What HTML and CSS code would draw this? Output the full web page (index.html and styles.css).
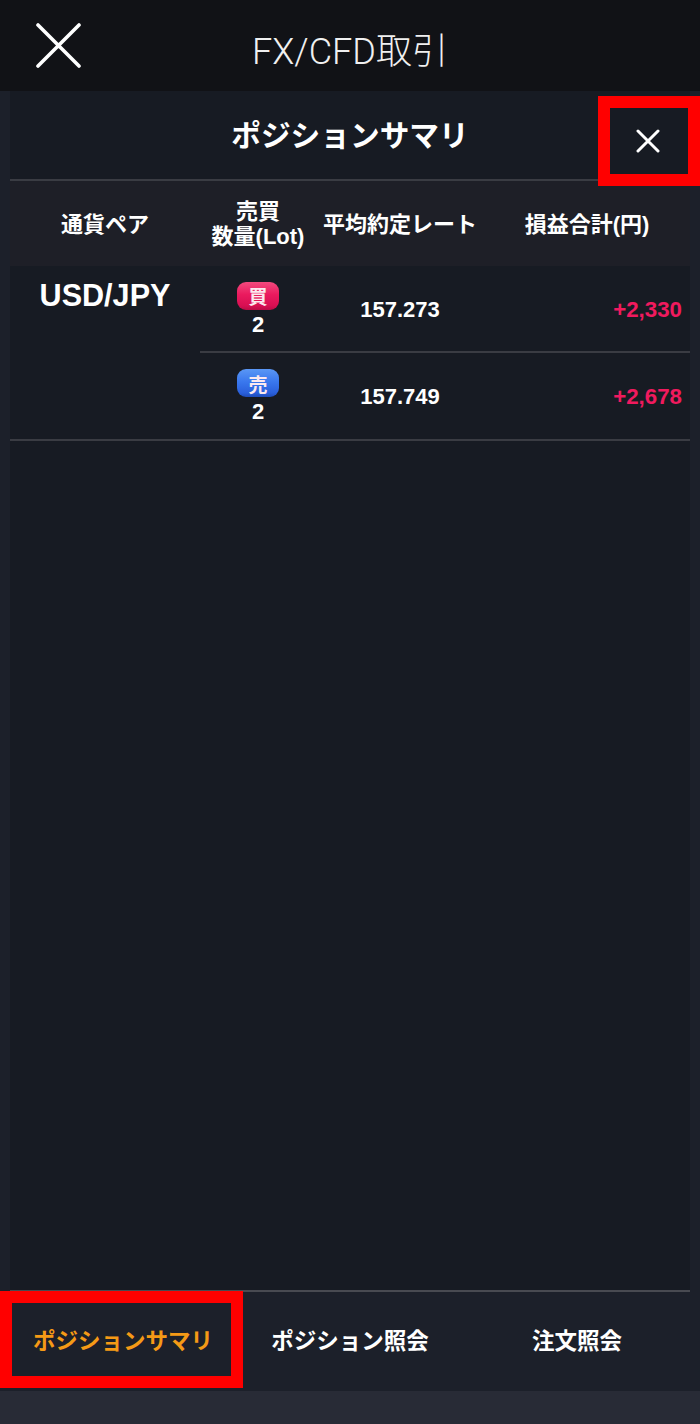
FILE: index.html
```html
<!DOCTYPE html>
<html lang="ja">
<head>
    <meta charset="UTF-8">
    <meta name="viewport" content="width=device-width, initial-scale=1.0">
    <title>FX/CFD取引</title>
    <link rel="stylesheet" href="styles.css">
</head>
<body>
    <div class="app">
        <header class="top-bar">
            <svg class="top-close" width="45" height="45" viewBox="0 0 45 45" fill="none">
                <path d="M2 2L43 43M43 2L2 43" stroke="currentColor" stroke-width="3.6" stroke-linecap="round"/>
            </svg>
            <h1>FX/CFD取引</h1>
        </header>

        <main class="panel">
            <div class="panel-title">
                <h2>ポジションサマリ</h2>
                <svg class="panel-close" width="24" height="24" viewBox="0 0 24 24" fill="none">
                    <path d="M2 2L22 22M22 2L2 22" stroke="currentColor" stroke-width="3" stroke-linecap="round"/>
                </svg>
            </div>

            <div class="table-head">
                <div class="head-cell">通貨ペア</div>
                <div class="head-side">売買<br>数量(Lot)</div>
                <div class="head-cell">平均約定レート</div>
                <div class="head-cell">損益合計(円)</div>
            </div>

            <section class="pair-group">
                <div class="pair-name">USD/JPY</div>
                <div class="pair-rows">
                    <div class="pos-row">
                        <div class="side">
                            <span class="tag tag-buy">買</span>
                            <span class="lot">2</span>
                        </div>
                        <div class="rate">157.273</div>
                        <div class="pnl">+2,330</div>
                    </div>
                    <div class="pos-row">
                        <div class="side">
                            <span class="tag tag-sell">売</span>
                            <span class="lot">2</span>
                        </div>
                        <div class="rate">157.749</div>
                        <div class="pnl">+2,678</div>
                    </div>
                </div>
            </section>
        </main>

        <nav class="tabs">
            <div class="tab tab-active">ポジションサマリ</div>
            <div class="tab">ポジション照会</div>
            <div class="tab">注文照会</div>
        </nav>

        <div class="bottom-strip"></div>
    </div>

    <!-- red marks over the screenshot -->
    <div class="mark mark-close"></div>
    <div class="mark mark-tab"></div>
</body>
</html>
```

FILE: styles.css
```css
:root {
    --top: #111216;
    --side: #1c202a;
    --panel: #171b23;
    --head: #1e1f27;
    --line: #3a3c43;
    --pink: #f01a5e;
    --orange: #f59a16;
}

html, body {
    margin: 0;
    padding: 0;
}

body {
    font-family: "Liberation Sans", "Noto Sans CJK JP", sans-serif;
    background: var(--side);
    color: #fff;
    height: 1424px;
    overflow: hidden;
}

.app {
    display: flex;
    flex-direction: column;
    height: 1424px;
}

.top-bar {
    height: 91px;
    background: var(--top);
    display: flex;
    align-items: center;
    justify-content: center;
    position: relative;
}

.top-bar h1 {
    margin: 4px 0 0;
    font-family: Roboto, "Noto Sans CJK JP", sans-serif;
    font-size: 36px;
    font-weight: 300;
    color: #f0f0f0;
}

.top-close {
    position: absolute;
    left: 36px;
    top: 23px;
    color: #fff;
}

.panel {
    flex: 1;
    margin: 0 10px;
    background: var(--panel);
    border-bottom: 2px solid #484a51;
}

.panel-title {
    height: 88px;
    display: flex;
    align-items: center;
    justify-content: center;
    position: relative;
    border-bottom: 2px solid var(--line);
}

.panel-title h2 {
    margin: 0 0 4px;
    font-size: 29.7px;
    font-weight: 700;
}

.panel-close {
    position: absolute;
    right: 30px;
    top: 38px;
    color: #fff;
}

.table-head {
    height: 85px;
    background: var(--head);
    display: grid;
    grid-template-columns: 190px 116px 168px 206px;
    align-items: center;
    text-align: center;
    font-size: 22px;
    font-weight: 700;
}

.head-cell {
    padding-bottom: 4px;
}

.head-side {
    line-height: 25px;
}

.pair-group {
    display: flex;
    border-bottom: 2px solid var(--line);
}

.pair-name {
    width: 190px;
    padding-top: 12px;
    text-align: center;
    font-size: 30.6px;
    font-weight: 700;
}

.pair-rows {
    flex: 1;
}

.pos-row {
    height: 85px;
    display: grid;
    grid-template-columns: 116px 168px 1fr;
    align-items: center;
    font-size: 22px;
    font-weight: 700;
}

.pos-row + .pos-row {
    height: 86px;
    border-top: 2px solid var(--line);
}

.side {
    display: flex;
    flex-direction: column;
    align-items: center;
    gap: 2px;
    padding-top: 2px;
}

.tag {
    width: 42px;
    height: 28px;
    border-radius: 9px;
    display: flex;
    align-items: center;
    justify-content: center;
    font-size: 19px;
    font-weight: 700;
    box-sizing: border-box;
    color: #fbe9ef;
}

.tag-buy {
    background: linear-gradient(#f24a7e, #ea1a5e 45%, #d80f52 85%, #b80c46);
}

.tag-sell {
    background: linear-gradient(#5a97f5, #3a78ee 45%, #2a60dc 85%, #1e4cb8);
}

.rate {
    padding-top: 2px;
    text-align: center;
}

.pnl {
    padding: 2px 8px 0 0;
    text-align: right;
    font-size: 22.3px;
    color: var(--pink);
}

.tabs {
    height: 99px;
    padding-bottom: 5px;
    box-sizing: border-box;
    background: var(--side);
    display: grid;
    grid-template-columns: 246px 208px 246px;
    align-items: center;
    text-align: center;
    font-size: 22.5px;
    font-weight: 700;
}

.tab-active {
    color: var(--orange);
}

.bottom-strip {
    height: 33px;
    background: #282b36;
}

.mark {
    position: absolute;
    box-sizing: border-box;
    border: 12px solid #ff0000;
}

.mark-close {
    left: 598px;
    top: 96px;
    width: 102px;
    height: 90px;
}

.mark-tab {
    left: 0;
    top: 1291px;
    width: 243px;
    height: 97px;
}
```
